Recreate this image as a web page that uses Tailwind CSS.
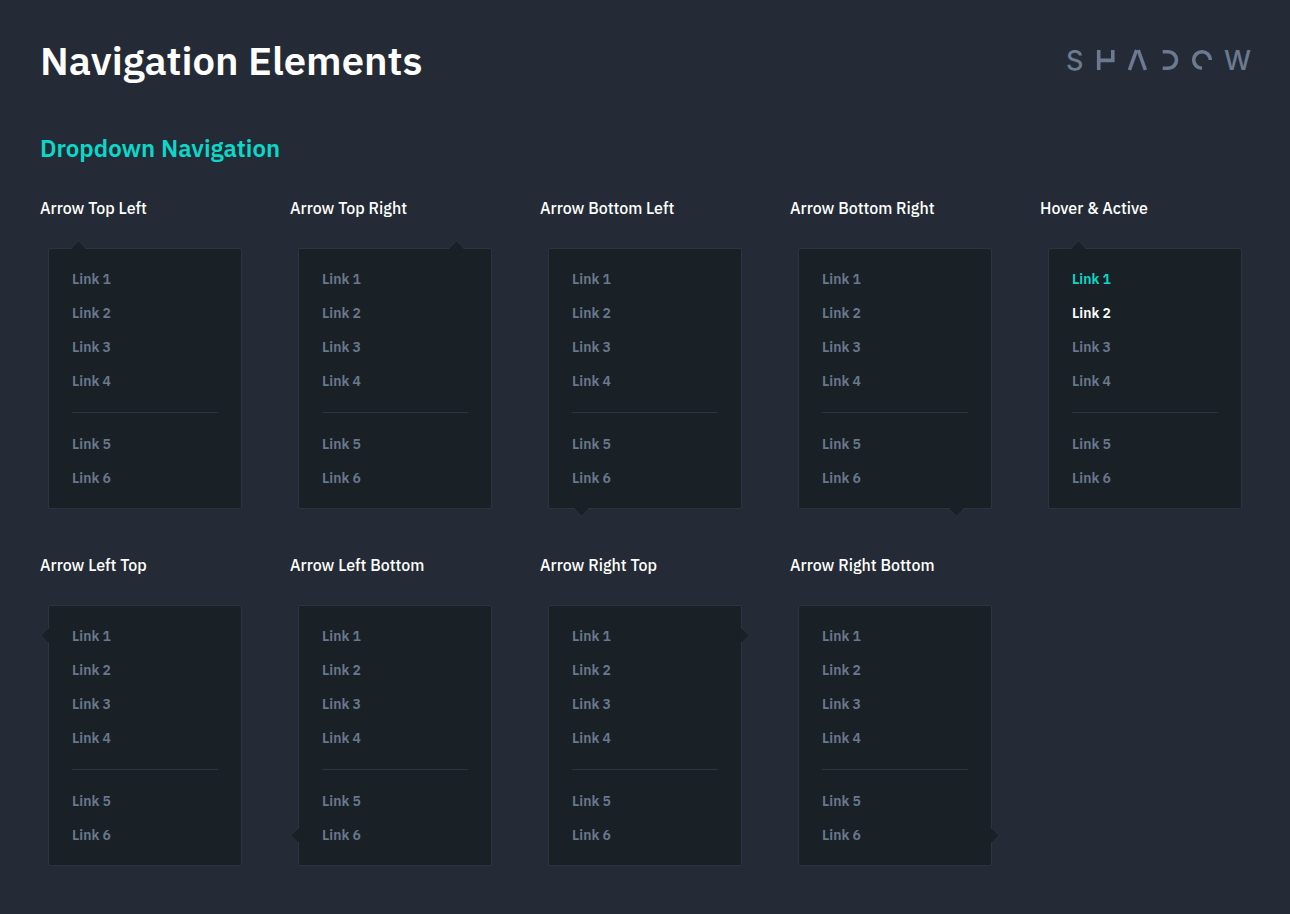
<!DOCTYPE html>
<html lang="en">
<head>
<meta charset="utf-8">
<meta name="viewport" content="width=device-width, initial-scale=1">
<title>Navigation Elements</title>
<script src="https://cdn.jsdelivr.net/npm/@tailwindcss/browser@4"></script>
</head>
<body class="min-h-screen bg-[#242b36] px-10 pt-9 pb-12 font-['IBM_Plex_Sans','Noto_Sans_CJK_SC',sans-serif] text-white">
<header class="flex items-center justify-between">
  <h1 class="text-[40px] leading-12 font-semibold">Navigation Elements</h1>
  <svg class="h-5 w-[183px] overflow-visible text-[#6b7a90]" viewBox="0 0 183 20" fill="none" stroke="currentColor" stroke-width="3.6" role="img" aria-label="Shadow">
    <text x="-1" y="20" class="fill-current stroke-none font-['Inter',sans-serif] text-[27px] font-medium">S</text>
    <path d="M31.7 0V20M31.7 10.4H45.8V0"/>
    <path d="M62.4 20L69.6 0M78.4 20L71.2 0"/>
    <path d="M95.7 1.7H101.2A8.3 8.3 0 0 1 101.2 18.3H95.7"/>
    <path d="M143.3 10A8.3 8.3 0 1 0 135 18.3"/>
    <text x="157" y="20" class="fill-current stroke-none font-['Inter',sans-serif] text-[27px] font-medium">W</text>
  </svg>
</header>
<main>
  <h2 class="mt-12 text-2xl leading-8 font-semibold text-[#0bd8c9]">Dropdown Navigation</h2>
  <div id="menus" class="mt-8 grid grid-cols-5 gap-x-10 gap-y-11"></div>
</main>
<script>
  const menus = [
    ['Arrow Top Left', '-top-[7px] left-6 border-t border-l'],
    ['Arrow Top Right', '-top-[7px] right-[29px] border-t border-l'],
    ['Arrow Bottom Left', '-bottom-[7px] left-[27px] border-r border-b'],
    ['Arrow Bottom Right', '-bottom-[7px] right-[29px] border-r border-b'],
    ['Hover &amp; Active', '-top-[7px] left-6 border-t border-l', ['text-[#0bd8c9]', 'text-white']],
    ['Arrow Left Top', '-left-[7px] top-6 border-b border-l'],
    ['Arrow Left Bottom', '-left-[7px] bottom-6 border-b border-l'],
    ['Arrow Right Top', '-right-[7px] top-6 border-t border-r'],
    ['Arrow Right Bottom', '-right-[7px] bottom-6 border-t border-r'],
  ];
  const link = (n, colors = []) =>
    `<li><a href="#link-${n}" class="block text-sm leading-[34px] font-semibold hover:text-white ${colors[n - 1] || 'text-[#69788e]'}">Link ${n}</a></li>`;
  document.getElementById('menus').innerHTML = menus.map(([title, arrow, colors]) => `
    <section>
      <h3 class="text-base leading-6 font-medium">${title}</h3>
      <nav aria-label="${title}" class="relative mx-2 mt-7 rounded-xs border border-[#293640] bg-[#192026] px-[23px] py-[13px]">
        <span class="absolute size-[11px] rotate-45 border-[#293640] bg-[#192026] ${arrow}"></span>
        <ul>${[1, 2, 3, 4].map(n => link(n, colors)).join('')}</ul>
        <hr class="my-3.5 border-[#293640]">
        <ul>${[5, 6].map(n => link(n, colors)).join('')}</ul>
      </nav>
    </section>`).join('');
</script>
</body>
</html>
